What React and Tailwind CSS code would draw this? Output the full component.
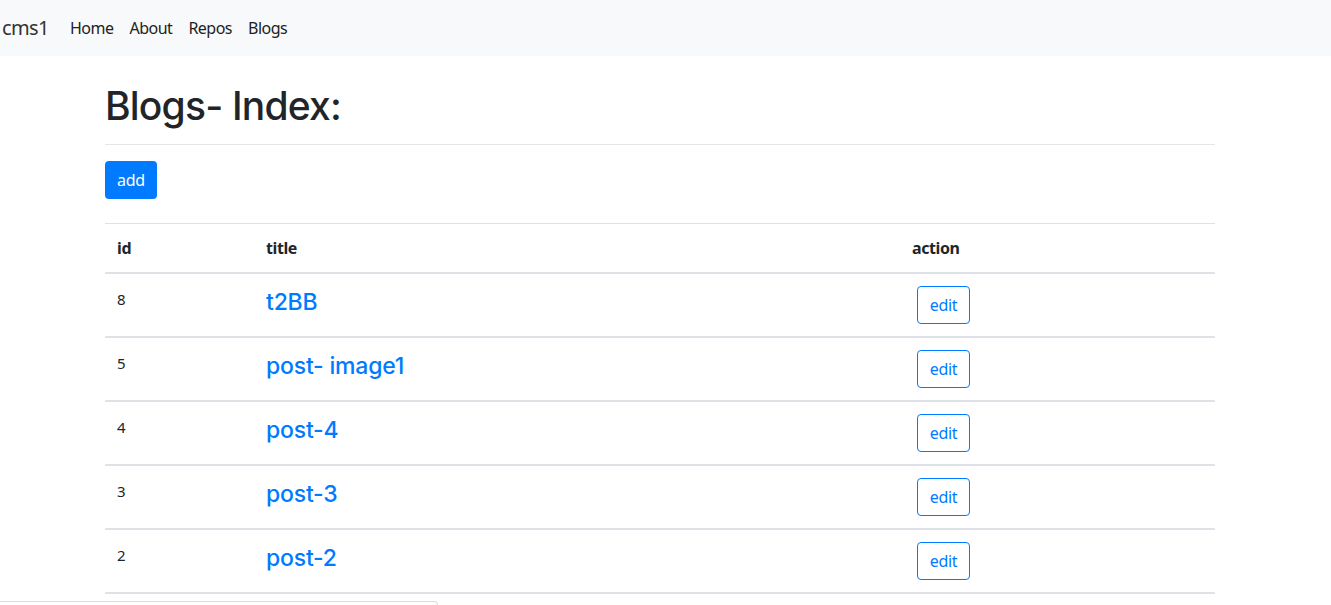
export default function App() {
  const rows = [
    { id: 8, title: "t2BB" },
    { id: 5, title: "post- image1" },
    { id: 4, title: "post-4" },
    { id: 3, title: "post-3" },
    { id: 2, title: "post-2" },
  ];
  const font = { fontFamily: '"Segoe UI", "Noto Sans", "Open Sans", sans-serif' };
  const med = { fontFamily: 'Inter, "Noto Sans", sans-serif' };
  return (
    <div className="min-h-[605px] bg-white text-[#212529] relative overflow-hidden" style={font}>
      <nav className="h-[56px] bg-[#f8f9fa] flex items-center">
        <span className="ml-[2px] text-[20px] tracking-[-0.6px] text-[#333] mr-[13px]">cms1</span>
        <div className="flex text-[16px] tracking-[-0.5px] text-[#222]">
          <a className="px-[8px]">Home</a>
          <a className="px-[8px]">About</a>
          <a className="px-[8px]">Repos</a>
          <a className="px-[8px]">Blogs</a>
        </div>
      </nav>
      <div className="ml-[105px] w-[1110px]">
        <h1 className="pt-[27px] text-[39px] leading-[45px] font-medium tracking-[-0.8px]" style={med}>Blogs- Index:</h1>
        <hr className="mt-[16px] mb-[16px] border-0 border-t border-[#e5e5e5]" />
        <button className="h-[38px] w-[52px] rounded-[4px] bg-[#007bff] text-white text-[16px] tracking-[-0.3px]">add</button>
        <div className="mt-[24px] border-t border-[#dee2e6]">
          <div className="flex h-[50px] border-b-2 border-[#dee2e6] items-center text-[16px] font-bold tracking-[-0.4px]">
            <div className="w-[149px] pl-[12px]">id</div>
            <div className="w-[646px] pl-[12px]">title</div>
            <div className="pl-[12px]">action</div>
          </div>
          {rows.map((r) => (
            <div key={r.id} className="flex h-[64px] border-b-2 border-[#dee2e6]">
              <div className="w-[149px] pl-[12px] pt-[13px] text-[15px] leading-[24px]">{r.id}</div>
              <div className="w-[646px] pl-[12px] pt-[14px]">
                <a className="text-[23px] leading-[29px] font-medium tracking-[-0.2px] text-[#007bff]" style={med}>{r.title}</a>
              </div>
              <div className="pl-[17px] pt-[12px]">
                <button className="h-[38px] w-[53px] rounded-[4px] border border-[#007bff] text-[#007bff] text-[16px] tracking-[-0.3px]">edit</button>
              </div>
            </div>
          ))}
        </div>
      </div>
      <div className="absolute left-0 top-[601px] w-[438px] h-[10px] border-t border-r border-[#dcdcdc] rounded-tr-[4px] bg-white" />
    </div>
  );
}
